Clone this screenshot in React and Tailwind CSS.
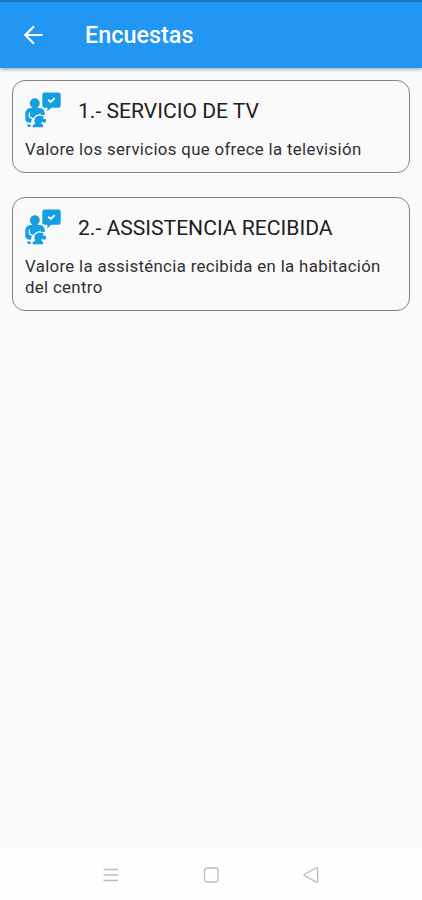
function SurveyIcon() {
  return (
    <svg className="-ml-px h-9 w-[38px] shrink-0" viewBox="0 0 38 36" fill="none">
      <g fill="#139fe0">
        <path d="M20.5.5h14a2.2 2.2 0 0 1 2.2 2.2v10.8a2.2 2.2 0 0 1-2.2 2.2h-7.3L23.4 19.6v-3.9h-2.9a2.2 2.2 0 0 1-2.2-2.2V2.7A2.2 2.2 0 0 1 20.5.5Z" />
        <circle cx="10.8" cy="11.2" r="4.9" />
        <path d="M8.2 14.5h5.4v1.6h2c2.7 0 4.4 1.5 5 4.2l.4 2.5-5.4.8-3 4-4.4-1.4-.9 4.6-3.6-.3-2.4-2.3v-5.8c0-3.8 1.9-6.1 5.3-6.3h1.6Z" />
        <path d="m10.2 28.4 3.3-4.5 6.2.1-2.4 7.4 1.8 1.5v2.3H8.7v-2.3l2.5-1Z" />
        <circle cx="20" cy="28.6" r="2.2" />
        <path d="M2.7 32.4h3.9v2.5H4.1Z" />
      </g>
      <path d="m24.2 7.8 2.5 2.2 4-3.9" stroke="#fafafa" strokeWidth="1.9" />
      <path d="M5.4 20.5v4.3l3.8 2.1 3.1-3.1 4.4-1.6M8.5 27l-1 5.2" stroke="#fafafa" strokeWidth="1.3" />
    </svg>
  );
}

function SurveyCard({ title, children }) {
  return (
    <section className="rounded-[13px] border border-[#858585] px-3 py-[11px]">
      <div className="flex h-[37px] items-start">
        <SurveyIcon />
        <h2 className="ml-4 whitespace-nowrap pt-px text-[21.1px] leading-9 text-[#202020]">{title}</h2>
      </div>
      <div className="mt-[10px] mb-px whitespace-nowrap text-[16.8px] leading-[21px] tracking-[0.345px] text-[#303030]">{children}</div>
    </section>
  );
}

export default function App() {
  return (
    <div className="flex h-[900px] w-[422px] flex-col overflow-hidden bg-[#fafafa] font-[Roboto,sans-serif]">
      <header className="relative flex h-[68px] shrink-0 items-center border-t-2 border-[#1976bd] bg-[#2196f3] pl-[21px] text-white shadow-[0_1px_4px_rgba(0,0,0,0.4)]">
        <svg className="size-6" viewBox="0 0 24 24" fill="none" stroke="currentColor" strokeWidth="2.2">
          <path d="M21.5 12H4.5M13 3.3 4.3 12l8.7 8.7" />
        </svg>
        <h1 className="ml-10 pt-[2px] text-[23.4px] font-medium">Encuestas</h1>
      </header>
      <main className="flex flex-1 flex-col gap-6 px-3 pt-3">
        <SurveyCard title="1.- SERVICIO DE TV">
          <p>Valore los servicios que ofrece la televisión</p>
        </SurveyCard>
        <SurveyCard title="2.- ASSISTENCIA RECIBIDA">
          <p>Valore la assisténcia recibida en la habitación<br />del centro</p>
        </SurveyCard>
      </main>
      <nav className="flex h-[51px] shrink-0 items-center justify-between bg-[#fefefe] px-[102px] text-[#bdbdbd]">
        <svg className="size-[18px]" viewBox="0 0 18 18" fill="none" stroke="currentColor" strokeWidth="1.3">
          <path d="M1.5 3.5h14.5M1.5 9h14.5M1.5 14.5h14.5" />
        </svg>
        <svg className="size-[18px]" viewBox="0 0 18 18" fill="none" stroke="currentColor" strokeWidth="1.3">
          <rect x="2.5" y="2" width="13.5" height="14" rx="2.5" />
        </svg>
        <svg className="size-[18px]" viewBox="0 0 18 18" fill="none" stroke="currentColor" strokeWidth="1.3" strokeLinejoin="round">
          <path d="M2.3 8.4 14.6 1.8q1-.4 1 .7v13q0 1.1-1 .6L2.3 9.6q-.8-.6 0-1.2Z" />
        </svg>
      </nav>
    </div>
  );
}
